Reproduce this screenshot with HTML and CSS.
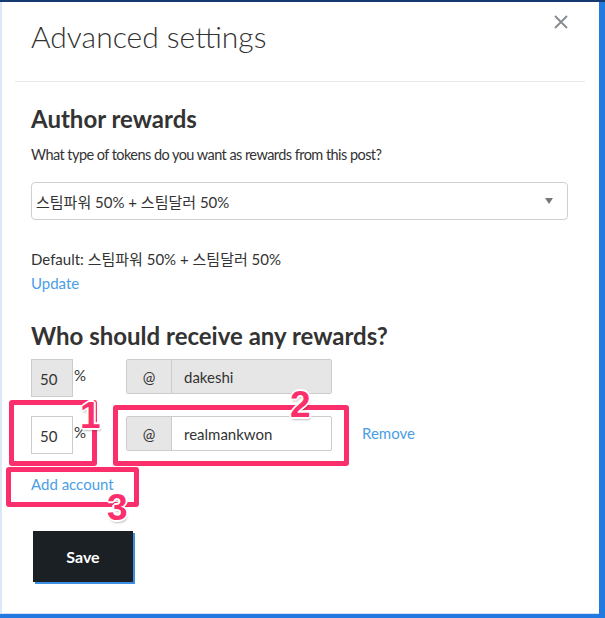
FILE: index.html
```html
<!doctype html>
<html lang="en">
<head>
  <meta charset="utf-8">
  <title>Advanced settings</title>
<link rel="stylesheet" href="styles.css">
</head>
<body>
  <div class="topbar"></div>
  <div class="modal">
    <div class="modal-header">
      <h2 class="modal-title">Advanced settings</h2>
      <button class="close" type="button" aria-label="Close">
        <svg width="14" height="14" viewBox="0 0 14 14"><path d="M1 1L13 13M13 1L1 13" stroke="#858a8f" stroke-width="1.8" fill="none"/></svg>
      </button>
    </div>

    <div class="modal-body">
      <h3 class="section-title">Author rewards</h3>
      <p class="help">What type of tokens do you want as rewards from this post?</p>
      <div class="select">
        <span>스팀파워 50% + 스팀달러 50%</span>
        <span class="caret"></span>
      </div>
      <p class="default">Default: 스팀파워 50% + 스팀달러 50%</p>
      <a class="link update" href="#">Update</a>

      <h3 class="section-title who">Who should receive any rewards?</h3>

      <div class="beneficiary">
        <div class="pct">
          <div class="pct-input disabled">50</div>
          <span class="pct-sign">%</span>
        </div>
        <div class="input-group">
          <span class="addon">@</span>
          <div class="account disabled">dakeshi</div>
        </div>
      </div>

      <div class="beneficiary second">
        <div class="pct">
          <div class="pct-input">50</div>
          <span class="pct-sign">%</span>
        </div>
        <div class="input-group">
          <span class="addon">@</span>
          <div class="account">realmankwon</div>
        </div>
        <a class="link remove" href="#">Remove</a>

        <div class="mark mark-1"></div>
        <span class="num num-1">1</span>
        <div class="mark mark-2"></div>
        <span class="num num-2">2</span>
      </div>

      <div class="add-row">
        <a class="link" href="#">Add account</a>
        <div class="mark mark-3"></div>
        <span class="num num-3">3</span>
      </div>

      <button class="save" type="button">Save</button>
    </div>
  </div>
</body>
</html>
```

FILE: styles.css
```css
* {
  box-sizing: border-box;
}

body {
  margin: 0;
  height: 618px;
  overflow: hidden;
  background: #2279df;
  font-family: "Lato", "Noto Sans CJK KR", sans-serif;
  color: #333;
}

.topbar {
  height: 2px;
  background: #163a70;
}

.modal {
  position: relative;
  width: 599px;
  height: 612px;
  background: #fff;
  border-left: 2px solid #dbe8f8;
  border-bottom: 1px solid #cfe1f7;
}

.modal-header {
  display: flex;
  justify-content: space-between;
  align-items: flex-start;
  height: 80px;
  margin: 0 14px 0 13px;
  padding: 0 17px 0 16px;
  border-bottom: 1px solid #e8e8e8;
}

.modal-title {
  margin: 16px 0 0;
  font-size: 30px;
  font-weight: 300;
  line-height: 36px;
  color: #333;
}

.close {
  margin-top: 13px;
  padding: 0;
  border: 0;
  background: none;
  line-height: 0;
}

.modal-body {
  padding: 23px 31px 0 29px;
}

.section-title {
  margin: 0;
  font-size: 24px;
  font-weight: 700;
  line-height: 28px;
  color: #333;
}

.help {
  margin: 12px 0 0;
  font-size: 14.5px;
  letter-spacing: -0.55px;
  line-height: 20px;
}

.select {
  display: flex;
  justify-content: space-between;
  align-items: center;
  height: 38px;
  margin-top: 17px;
  padding: 0 14px 0 4px;
  border: 1px solid #cfcfcf;
  border-radius: 4px;
  font-size: 15px;
}

.caret {
  width: 0;
  height: 0;
  border-left: 4px solid transparent;
  border-right: 4px solid transparent;
  border-top: 6px solid #777;
}

.default {
  margin: 29px 0 0;
  font-size: 15px;
  line-height: 20px;
}

.link {
  color: #4a9ee6;
  text-decoration: none;
  font-size: 15px;
}

.update {
  display: block;
  margin-top: 4px;
  line-height: 20px;
}

.who {
  margin-top: 29px;
}

.beneficiary {
  position: relative;
  display: flex;
  align-items: flex-start;
  margin-top: 9px;
}

.beneficiary.second {
  margin-top: 19px;
}

.pct {
  display: flex;
  align-items: flex-start;
  width: 95px;
}

.pct-input {
  width: 42px;
  height: 38px;
  padding: 10px 0 0 8px;
  border: 1px solid #ccc;
  font-size: 15px;
  line-height: 18px;
  background: #fff;
}

.pct-input.disabled,
.account.disabled {
  background: #e6e6e6;
}

.pct-sign {
  margin: 7px 0 0 1px;
  font-size: 15px;
}

.input-group {
  display: flex;
  width: 206px;
  height: 35px;
  border: 1px solid #ccc;
  border-radius: 2px;
  font-size: 15px;
}

.addon {
  display: flex;
  align-items: center;
  justify-content: center;
  width: 45px;
  background: #e6e6e6;
  border-right: 1px solid #ccc;
}

.account {
  flex: 1;
  padding: 7px 0 0 12px;
  line-height: 20px;
}

.remove {
  margin: 7px 0 0 30px;
  line-height: 20px;
}

.mark {
  position: absolute;
  border: 5px solid #fc2f6d;
  border-radius: 3px;
}

.mark-1 {
  left: -22px;
  top: -16px;
  width: 88px;
  height: 66px;
}

.mark-2 {
  left: 82px;
  top: -11px;
  width: 236px;
  height: 61px;
}

.num {
  position: absolute;
  font-family: "Liberation Sans", sans-serif;
  font-weight: 700;
  font-size: 37px;
  line-height: 36px;
  color: #fc2f6d;
  text-shadow: -2px 0 #fff, 2px 0 #fff, 0 -2px #fff, 0 2px #fff,
    -1px -1px #fff, 1px 1px #fff, -1px 1px #fff, 1px -1px #fff, 1px 3px 2px rgba(0,0,0,0.25);
}

.num-1 {
  left: 49px;
  top: -18px;
}

.num-2 {
  left: 259px;
  top: -29px;
}

.add-row {
  position: relative;
  margin-top: 20px;
  line-height: 20px;
}

.mark-3 {
  left: -25px;
  top: -7px;
  width: 133px;
  height: 40px;
}

.num-3 {
  left: 76px;
  top: 16px;
}

.save {
  display: block;
  width: 100px;
  height: 51px;
  margin-top: 37px;
  margin-left: 2px;
  border: 0;
  background: #1a2024;
  color: #fff;
  font-family: "Lato", sans-serif;
  font-size: 16px;
  font-weight: 700;
  box-shadow: 2px 2px 0 #3d8fe3;
}
```
